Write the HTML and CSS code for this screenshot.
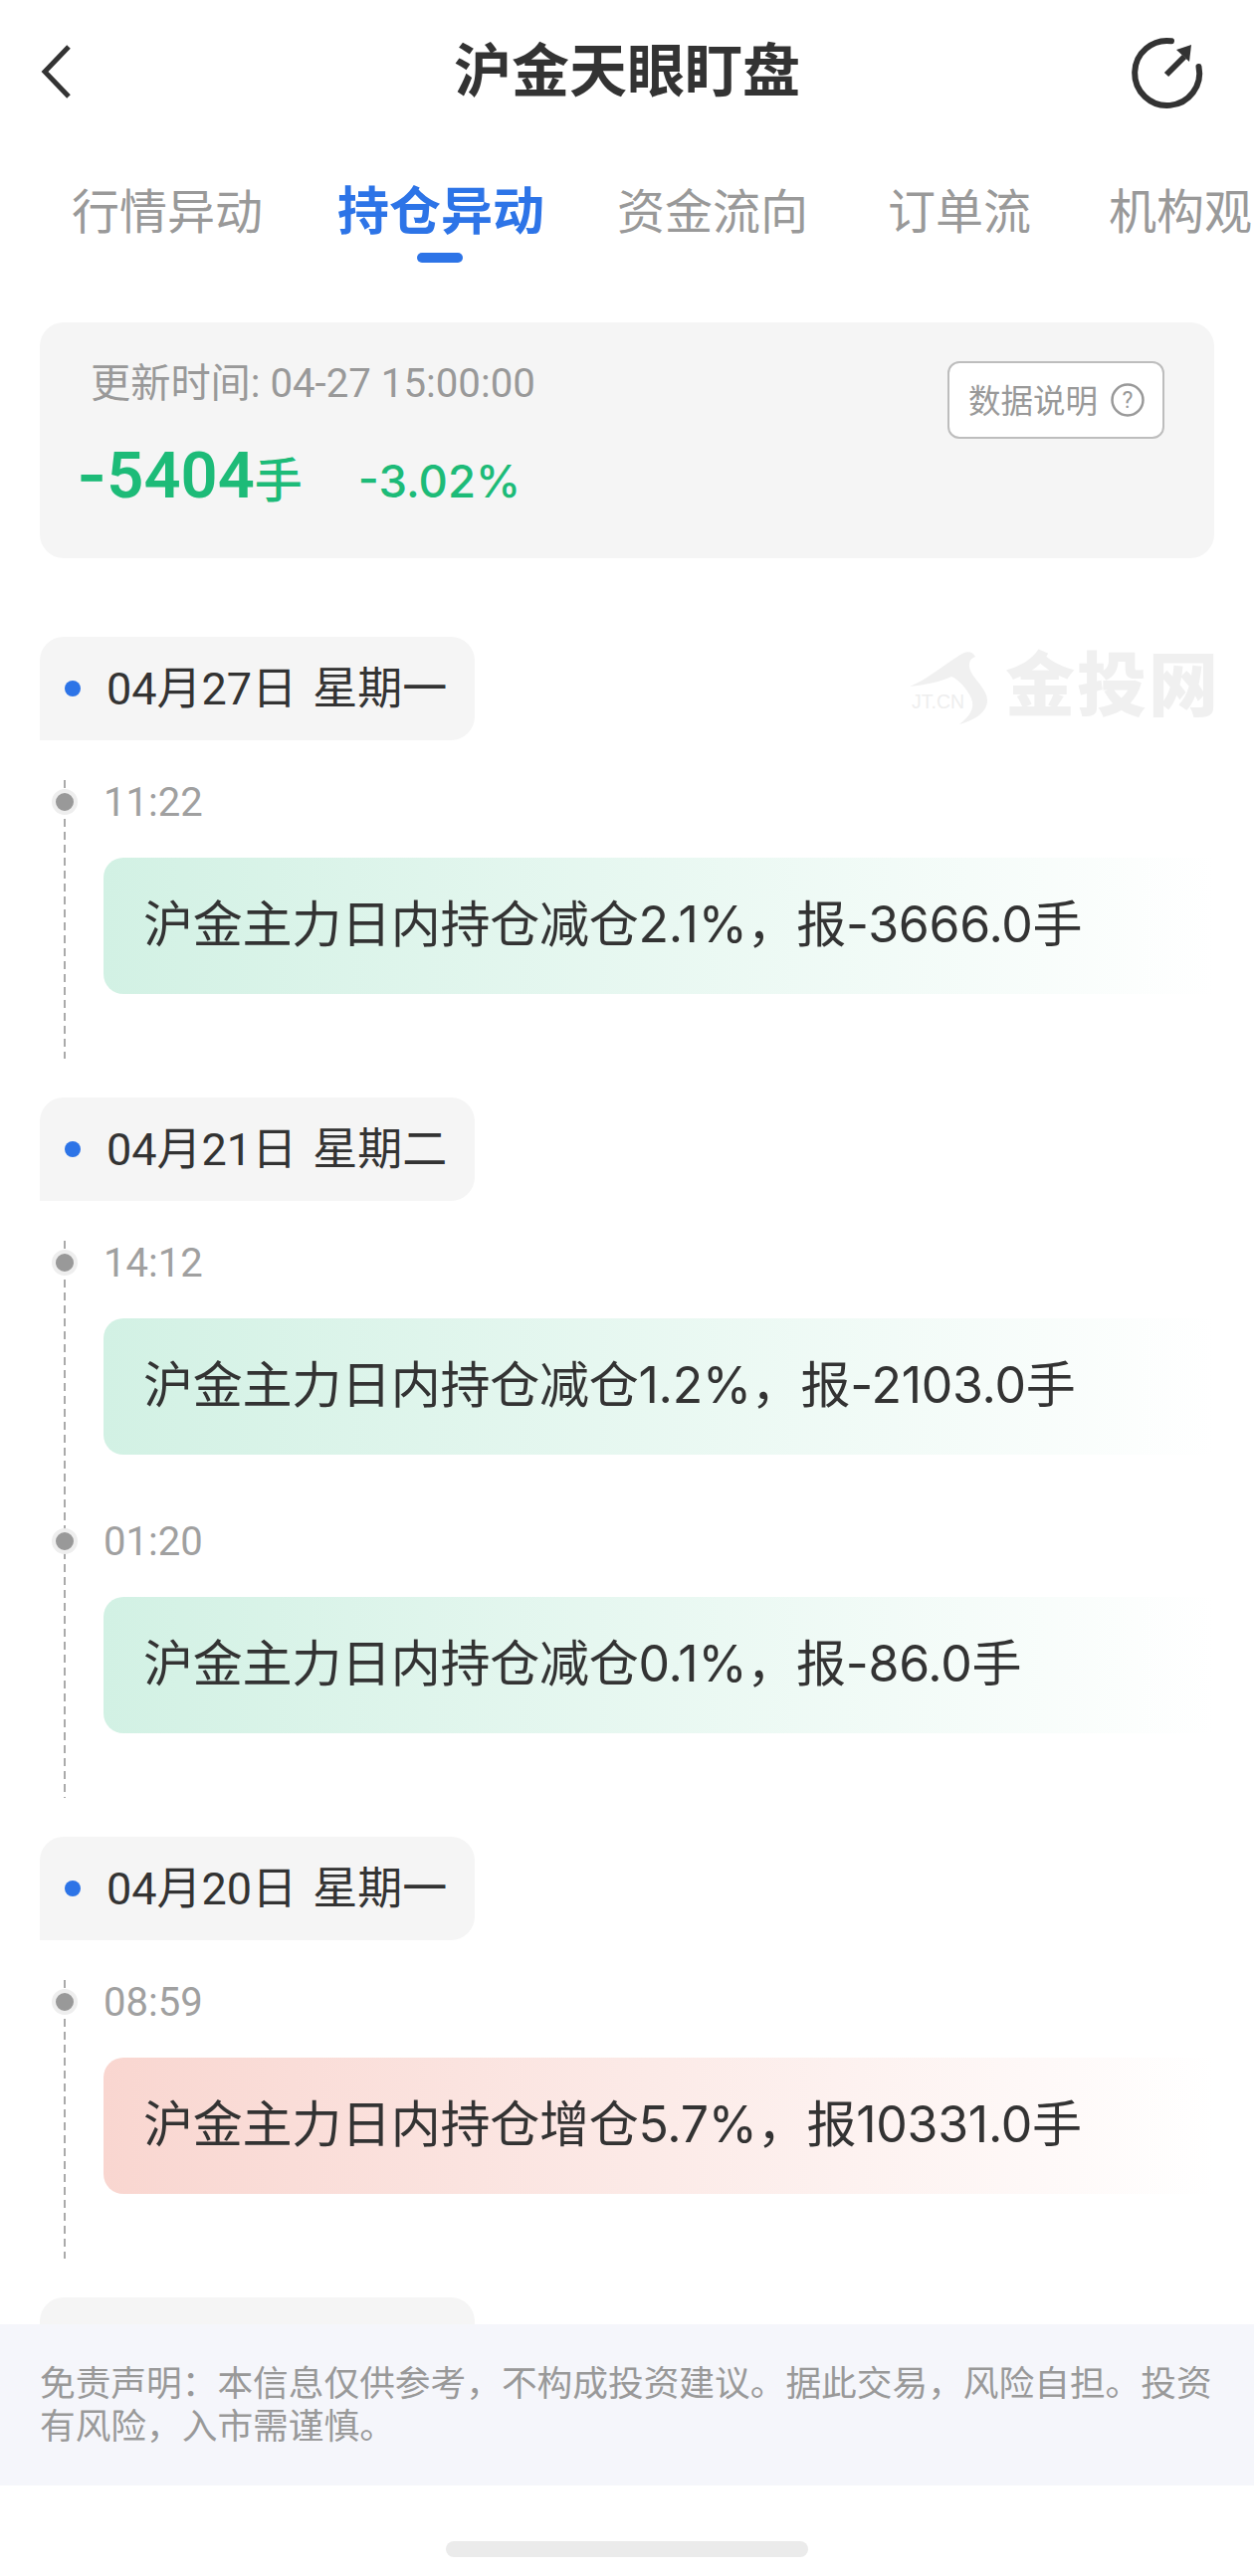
FILE: index.html
```html
<!DOCTYPE html>
<html lang="zh-CN">
<head>
<meta charset="utf-8">
<title>沪金天眼盯盘</title>
<link rel="stylesheet" href="styles.css">
</head>
<body>
<div class="page">
  <header class="topbar">
    <svg class="back" width="34" height="56" viewBox="0 0 34 56"><path d="M29 3 L5 28 L29 53" fill="none" stroke="#333" stroke-width="5"/></svg>
    <h1 class="title">沪金天眼盯盘</h1>
    <svg class="timer" width="76" height="76" viewBox="0 0 76 76"><path d="M42 5.3 A32.5 32.5 0 1 0 69.5 31" fill="none" stroke="#333" stroke-width="6" stroke-linecap="round"/><path d="M37 39 L55 21" fill="none" stroke="#333" stroke-width="6"/><path d="M47 14 L62 9 L60 26 Z" fill="#333"/></svg>
  </header>
  <nav class="tabs">
    <span class="tab">行情异动</span>
    <span class="tab active">持仓异动</span>
    <span class="tab">资金流向</span>
    <span class="tab">订单流</span>
    <span class="tab">机构观</span>
  </nav>
  <section class="summary">
    <div class="summary-left">
      <div class="updated">更新时间: 04-27 15:00:00</div>
      <div class="figures">
        <span class="big"><span class="minus">-</span>5404<small>手</small></span>
        <span class="pct">-3.02%</span>
      </div>
    </div>
    <div class="explain">数据说明
      <svg width="34" height="34" viewBox="0 0 34 34"><circle cx="17" cy="17" r="15.5" fill="none" stroke="#999" stroke-width="2.5"/><text x="17" y="25" text-anchor="middle" class="q">?</text></svg>
    </div>
  </section>
  <main class="feed">
    <div class="watermark">
      <svg width="80" height="76" viewBox="0 0 80 76"><path d="M0 36 C20 28 42 8 55 2 C60 0 64 2 66 6 C60 8 58 14 62 22 C68 32 78 40 78 50 C78 62 65 70 50 74 C60 66 66 58 62 48 C58 38 48 28 42 26 C30 32 15 34 0 36 Z" fill="#f0f0f0"/></svg>
      <span class="wm-latin">JT.CN</span>
      <span class="wm-name">金投网</span>
    </div>

    <section class="group">
      <div class="date"><i class="dot"></i>04月27日 星期一</div>
      <div class="timeline">
        <article class="item"><i class="node"></i><time class="time">11:22</time><div class="box down"><span>沪金主力日内持仓减仓2.1%，报-3666.0手</span></div></article>
      </div>
    </section>
    <section class="group">
      <div class="date"><i class="dot"></i>04月21日 星期二</div>
      <div class="timeline">
        <article class="item"><i class="node"></i><time class="time">14:12</time><div class="box down"><span>沪金主力日内持仓减仓1.2%，报-2103.0手</span></div></article>
        <article class="item"><i class="node"></i><time class="time">01:20</time><div class="box down"><span>沪金主力日内持仓减仓0.1%，报-86.0手</span></div></article>
      </div>
    </section>
    <section class="group">
      <div class="date"><i class="dot"></i>04月20日 星期一</div>
      <div class="timeline">
        <article class="item"><i class="node"></i><time class="time">08:59</time><div class="box up"><span>沪金主力日内持仓增仓5.7%，报10331.0手</span></div></article>
      </div>
    </section>
    <section class="group">
      <div class="date"></div>
    </section>
  </main>
  <footer class="footer">
    <p class="notice">免责声明：本信息仅供参考，不构成投资建议。据此交易，风险自担。投资有风险，入市需谨慎。</p>
    <div class="home-area"><span class="home"></span></div>
  </footer>
</div>
</body>
</html>
```
FILE: styles.css
```css
* { box-sizing: border-box; }
html, body { margin: 0; padding: 0; background: #fff; }
body { font-family: Roboto, "Noto Sans CJK SC", sans-serif; }
.page { position: relative; width: 1260px; height: 2589px; overflow: hidden; background: #fff; }

.topbar { display: grid; grid-template-columns: 1fr auto 1fr; align-items: center; height: 144px; padding: 0 49px; }
.back { margin-left: -9px; }
.title { margin: 0; font-size: 58px; line-height: 72px; font-weight: 700; color: #333; }
.timer { justify-self: end; margin-top: 4px; }

.tabs { display: flex; height: 180px; padding: 0 0 0 72px; white-space: nowrap; align-items: flex-start; }
.tab { position: relative; font-size: 48px; line-height: 68px; margin-top: 36px; color: #999; }
.tab:nth-child(2) { margin-left: 75px; }
.tab:nth-child(3) { margin-left: 73px; }
.tab:nth-child(4) { margin-left: 80px; }
.tab:nth-child(5) { margin-left: 78px; }
.tab.active { font-size: 52px; font-weight: 700; color: #2d74e7; }
.tab.active::after { content: ""; position: absolute; left: 80px; bottom: -16px; width: 46px; height: 10px; border-radius: 5px; background: #2d74e7; }

.summary { display: flex; justify-content: space-between; margin: 0 40px; height: 237px; padding: 36px 50px 0 40px; border-radius: 24px; background: #f5f5f5; }
.updated { margin-left: 11px; font-size: 40.2px; line-height: 52px; color: #999; }
.figures { display: flex; align-items: baseline; gap: 56px; margin: 25px 0 0 -3px; color: #1dbb78; }
.big { font-size: 65px; line-height: 80px; font-weight: 600; }
.minus { font-family: Inter, sans-serif; }
.big small { font-size: 48px; font-weight: 500; }
.pct { font-family: Inter, "Noto Sans CJK SC", sans-serif; font-size: 45.5px; font-weight: 500; }
.explain { display: flex; align-items: center; justify-content: space-between; width: 218px; height: 78px; margin-top: 3px; padding: 0 18px 4px 19px; border: 2px solid #bdbdbd; border-radius: 12px; background: #fff; font-size: 32.5px; color: #999; }
.explain svg { margin-top: 4px; }
.q { font-family: Roboto, sans-serif; font-size: 23px; fill: #999; }

.feed { position: relative; padding-top: 79px; }
.group { margin-bottom: 39px; }
.date { display: flex; align-items: center; width: 437px; height: 104px; margin-left: 40px; padding: 0 0 7px 25px; border-radius: 24px 24px 24px 0; background: #f5f5f5; font-size: 45px; word-spacing: 5px; color: #333; white-space: nowrap; }
.dot { width: 16px; height: 16px; margin: 7px 26px 0 0; border-radius: 50%; background: #2d74e7; }
.timeline { margin: 40px 0 0 64px; padding-left: 2px; background: repeating-linear-gradient(#aaa 0 8px, transparent 8px 13px) left top / 2px 100% no-repeat; }
.item { position: relative; height: 280px; padding-left: 38px; }
.node { position: absolute; left: -14px; top: 9px; width: 26px; height: 26px; border-radius: 50%; background: #999; border: 4px solid #eee; }
.time { display: block; height: 78px; padding-top: 2px; font-size: 40px; line-height: 42px; color: #a0a0a0; }
.box { display: flex; align-items: center; width: 1116px; height: 137px; padding: 0 0 12px 40px; border-radius: 20px 0 0 20px; font-family: Inter, "Noto Sans CJK SC", sans-serif; font-size: 50px; letter-spacing: -0.25px; color: #333; white-space: nowrap; }
.down { background: linear-gradient(90deg, #d2f1e4, #fff); }
.up { background: linear-gradient(90deg, #f9d6d0, #fff); }

.watermark { position: absolute; top: 86px; left: 914px; width: 320px; height: 90px; display: flex; align-items: flex-start; padding-top: 7px; }
.wm-latin { position: absolute; left: 2px; top: 47px; font-family: "Liberation Sans", sans-serif; font-size: 19.5px; color: #eee; }
.wm-name { position: absolute; left: 96px; top: -5px; font-size: 70px; line-height: 96px; font-weight: 900; letter-spacing: 2px; color: #f0f0f0; }

.footer { position: absolute; left: 0; right: 0; top: 2336px; height: 253px; background: #fff; }
.notice { margin: 0; height: 162px; padding: 39px 30px 0 40px; background: #f5f6fb; font-size: 35.7px; line-height: 43px; color: #999; }
.home-area { display: flex; justify-content: center; padding-top: 56px; }
.home { width: 364px; height: 16px; border-radius: 8px; background: #ebebeb; }
```
